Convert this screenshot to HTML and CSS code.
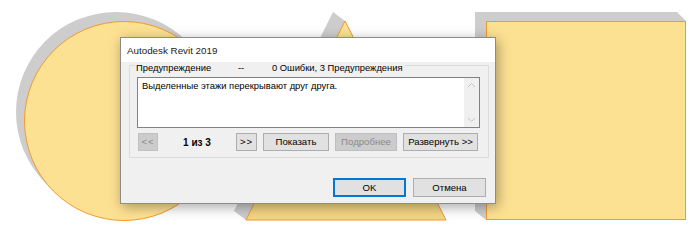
FILE: index.html
```html
<!DOCTYPE html>
<html lang="ru">
<head>
<meta charset="utf-8">
<title>Autodesk Revit 2019</title>
<link rel="stylesheet" href="styles.css">
</head>
<body>
<div class="stage">
  <svg class="canvas" width="698" height="235" viewBox="0 0 698 235">
    <defs>
      <linearGradient id="tri" x1="0" y1="0" x2="0" y2="1">
        <stop offset="0" stop-color="#fbe29a"/>
        <stop offset="1" stop-color="#f4d581"/>
      </linearGradient>
    </defs>
    <!-- circle extrusion -->
    <g fill="#cdcdcd">
      <circle cx="116" cy="112" r="100"/>
      <circle cx="118" cy="114" r="100"/>
      <circle cx="120" cy="116" r="100"/>
      <circle cx="122" cy="118" r="100"/>
    </g>
    <circle cx="124" cy="121" r="99.5" fill="#fde192" stroke="#f39a2f" stroke-width="1"/>
    <!-- triangle extrusion -->
    <polygon points="234,211 333,12 345,21 446,220 246,220" fill="#cdcdcd"/>
    <polygon points="345,21 446,220 246,220" fill="url(#tri)" stroke="#f39a2f" stroke-width="1"/>
    <!-- square extrusion -->
    <polygon points="475,12 677,12 686,21 686,220 486,220 475,211" fill="#cdcdcd"/>
    <rect x="486.5" y="21.5" width="199" height="198" fill="#fde192" stroke="#f39a2f" stroke-width="1"/>
  </svg>

  <div class="dialog">
    <div class="titlebar">Autodesk Revit 2019</div>
    <div class="body">
      <div class="group">
        <div class="legend">
          <span class="lg-type">Предупреждение</span>
          <span class="lg-dash">--</span>
          <span class="lg-count">0 Ошибки, 3 Предупреждения</span>
        </div>
        <div class="textbox">
          <div class="msg">Выделенные этажи перекрывают друг друга.</div>
          <div class="scrollbar">
            <svg class="arrow" width="9" height="6" viewBox="0 0 9 6"><path d="M1 5 L4.5 1.5 L8 5" fill="none" stroke="#c2c2c2" stroke-width="1"/></svg>
            <svg class="arrow" width="9" height="6" viewBox="0 0 9 6"><path d="M1 1 L4.5 4.5 L8 1" fill="none" stroke="#c2c2c2" stroke-width="1"/></svg>
          </div>
        </div>
        <div class="navrow">
          <button class="btn btn-nav" disabled>&lt;&lt;</button>
          <span class="pager">1 из 3</span>
          <button class="btn btn-nav btn-next">&gt;&gt;</button>
          <button class="btn btn-show">Показать</button>
          <button class="btn btn-more" disabled>Подробнее</button>
          <button class="btn btn-expand">Развернуть &gt;&gt;</button>
        </div>
      </div>
      <div class="actions">
        <button class="btn btn-ok">OK</button>
        <button class="btn btn-cancel">Отмена</button>
      </div>
    </div>
  </div>
</div>
</body>
</html>
```
FILE: styles.css
```css
* { box-sizing: border-box; }
html, body { margin: 0; padding: 0; background: #ffffff; }
body { width: 698px; height: 235px; overflow: hidden; }
.stage { position: relative; width: 698px; height: 235px; }
.canvas { position: absolute; left: 0; top: 0; display: block; }

.dialog {
  position: absolute;
  left: 120px;
  top: 37px;
  width: 376px;
  height: 167px;
  border: 1px solid #8c8c8c;
  background: #f0f0f0;
  box-shadow: 2px 3px 12px rgba(0, 0, 0, 0.35);
  display: flex;
  flex-direction: column;
  font-family: "Liberation Sans", Arial, sans-serif;
  font-size: 9.4px;
  color: #000;
}
.titlebar {
  height: 24px;
  background: #ffffff;
  padding-left: 6px;
  line-height: 25px;
  font-size: 9.8px;
  color: #1a1a1a;
}
.body {
  flex: 1;
  display: flex;
  flex-direction: column;
  padding: 3px 6px 0 8px;
}
.group {
  height: 93px;
  border: 1px solid #dcdcdc;
  padding: 0 8px 0 7px;
  display: flex;
  flex-direction: column;
}
.legend {
  display: flex;
  align-self: flex-start;
  margin: -4px 0 0 -2px;
  height: 12px;
  line-height: 12px;
  padding: 0 1px;
  background: #f0f0f0;
}
.lg-type { width: 102px; }
.lg-dash { width: 34px; }
.lg-count { padding-right: 1px; }

.textbox {
  margin-top: 3px;
  height: 51px;
  border: 1px solid #828282;
  background: #ffffff;
  display: flex;
}
.msg {
  flex: 1;
  padding: 2px 4px;
  line-height: 12px;
}
.scrollbar {
  width: 15px;
  background: #f0f0f0;
  display: flex;
  flex-direction: column;
  justify-content: space-between;
  align-items: center;
  padding: 4px 0 4px;
}
.arrow { display: block; }

.navrow {
  display: flex;
  align-items: center;
  margin-top: 5px;
  padding-left: 1px;
  height: 18px;
}
.btn {
  height: 18px;
  padding: 0;
  margin: 0;
  border: 1px solid #adadad;
  background: #e1e1e1;
  font-family: "Liberation Sans", Arial, sans-serif;
  font-size: 9.6px;
  color: #000;
  line-height: 16px;
  text-align: center;
}
.btn:disabled {
  background: #cccccc;
  border-color: #bfbfbf;
  color: #8a8a8a;
}
.btn-nav { width: 20px; letter-spacing: 1px; }
.btn-next { width: 21px; }
.pager {
  width: 78px;
  text-align: center;
  font-weight: bold;
  font-size: 10px;
}
.btn-show { width: 66px; margin-left: 6px; }
.btn-more { width: 62px; margin-left: 6px; }
.btn-expand { width: 75px; margin-left: 6px; }

.actions {
  display: flex;
  justify-content: flex-end;
  gap: 7px;
  margin-top: 20px;
  padding-right: 3px;
}
.btn-ok, .btn-cancel { width: 73px; height: 19px; line-height: 17px; }
.btn-ok {
  border-color: #0078d7;
  box-shadow: inset 0 0 0 1px #0078d7;
}
```
